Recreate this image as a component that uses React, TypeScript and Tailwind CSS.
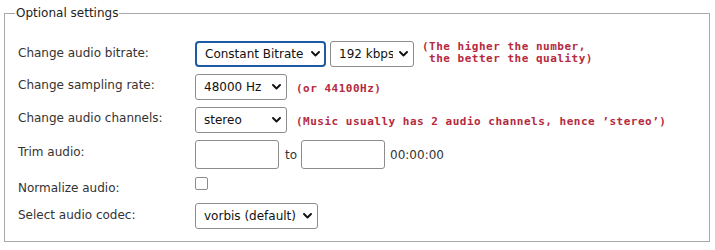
import React from "react"

const font = { fontFamily: '"DejaVu Sans", Verdana, sans-serif' }

function Chevron() {
  return (
    <svg width="9" height="6" viewBox="0 0 9 6" className="pointer-events-none absolute right-[6px] top-1/2 -translate-y-1/2">
      <polyline points="1,1 4.5,4.5 8,1" fill="none" stroke="#111" strokeWidth="1.9" strokeLinecap="round" strokeLinejoin="round" />
    </svg>
  )
}

function Select({ width, value, options, focused }: { width: string; value: string; options: string[]; focused?: boolean }) {
  return (
    <div className={`relative h-[26px] ${width}`}>
      <select
        defaultValue={value}
        className={`h-full w-full appearance-none bg-white pl-[8px] pr-5 text-[12px] text-[#111] outline-none ${
          focused ? "rounded-[4px] border-2 border-[#1f5aa6] pl-[7px]" : "rounded-[3px] border border-[#8c8c8c]"
        }`}
        style={font}
      >
        {options.map((o) => (
          <option key={o}>{o}</option>
        ))}
      </select>
      <Chevron />
    </div>
  )
}

function Note({ children }: { children: React.ReactNode }) {
  return (
    <span
      className="whitespace-pre text-[11px] font-bold leading-[11px] tracking-[0.5px] text-[#b52a3e]"
      style={{ fontFamily: '"DejaVu Sans Mono", "Liberation Mono", monospace' }}
    >
      {children}
    </span>
  )
}

export default function App() {
  return (
    <div className="h-[250px] w-[715px] bg-white pt-[5px]" style={font}>
      <fieldset className="ml-[4px] w-[706px] border border-[#a8a8a8] pb-[12px] pl-[10px]">
        <legend className="px-[1px] text-[12px] leading-[16px] text-[#222]">Optional settings</legend>

        <div className="flex flex-col gap-[7px] pl-[3px] pt-[20px] text-[12px] leading-4 text-[#333]">
          {/* bitrate */}
          <div className="flex h-[26px] items-start">
            <label className="w-[177px] pt-1">Change audio bitrate:</label>
            <Select width="w-[131px]" value="Constant Bitrate" options={["Constant Bitrate", "Variable Bitrate"]} focused />
            <div className="ml-[4px]">
              <Select width="w-[84px]" value="192 kbps" options={["128 kbps", "192 kbps", "256 kbps", "320 kbps"]} />
            </div>
            <div className="ml-[8px] flex flex-col gap-[1px]">
              <Note>(The higher the number,</Note>
              <Note> the better the quality)</Note>
            </div>
          </div>

          {/* sampling */}
          <div className="flex h-[26px] items-start">
            <label className="w-[177px] pt-[3px]">Change sampling rate:</label>
            <Select width="w-[92px]" value="48000 Hz" options={["44100 Hz", "48000 Hz"]} />
            <div className="ml-[9px] flex h-[26px] items-center pt-[2px]">
              <Note>(or 44100Hz)</Note>
            </div>
          </div>

          {/* channels */}
          <div className="flex h-[26px] items-start">
            <label className="w-[177px] pt-[3px]">Change audio channels:</label>
            <Select width="w-[92px]" value="stereo" options={["mono", "stereo"]} />
            <div className="ml-[9px] flex h-[26px] items-center pt-[2px]">
              <Note>(Music usually has 2 audio channels, hence ’stereo’)</Note>
            </div>
          </div>

          {/* trim */}
          <div className="flex h-[29px] items-start">
            <label className="w-[177px] pt-1">Trim audio:</label>
            <input type="text" className="h-[29px] w-[84px] rounded-[3px] border border-[#8c8c8c] bg-white outline-none" />
            <span className="ml-[6px] mr-[4px] self-center pt-[1px]">to</span>
            <input type="text" className="h-[29px] w-[84px] rounded-[3px] border border-[#8c8c8c] bg-white outline-none" />
            <span className="ml-[5px] self-center pt-[1px]">00:00:00</span>
          </div>

          {/* normalize */}
          <div className="flex h-[20px] items-start">
            <label className="w-[177px] pt-1">Normalize audio:</label>
            <input type="checkbox" className="mt-[1px] h-[13px] w-[13px] appearance-none rounded-[2px] border border-[#8c8c8c] bg-white" />
          </div>

          {/* codec */}
          <div className="flex h-[26px] items-start">
            <label className="w-[177px] pt-1">Select audio codec:</label>
            <Select width="w-[123px]" value="vorbis (default)" options={["vorbis (default)", "mp3", "aac", "flac"]} />
          </div>
        </div>
      </fieldset>
    </div>
  )
}
